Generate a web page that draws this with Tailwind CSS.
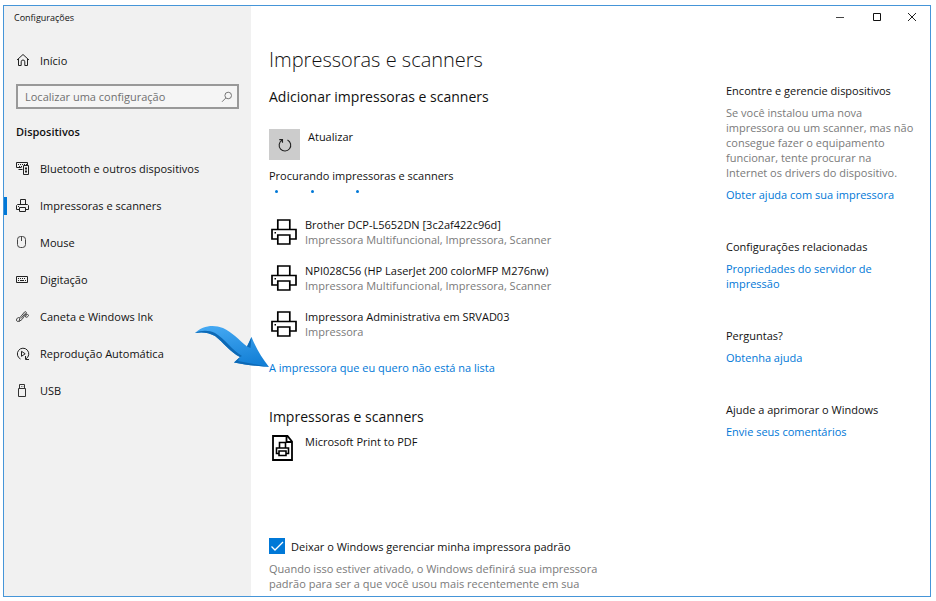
<!DOCTYPE html>
<html lang="pt-BR">
<head>
  <meta charset="UTF-8">
  <meta name="viewport" content="width=device-width, initial-scale=1.0">
  <title>Configurações</title>
  <script src="https://cdn.jsdelivr.net/npm/@tailwindcss/browser@4"></script>
</head>
<body class="bg-white font-['Open_Sans',sans-serif] text-[11px] leading-[15px] text-[#111]">

  <!-- Shared printer icon -->
  <svg class="hidden">
    <symbol id="printer" viewBox="0 0 26 26">
      <path d="M6.8 10V1h12v9M6.8 20H1V10.500h24V20h-6.2M6.8 16h12v9h-12z" fill="none" stroke="#000" stroke-width="1.7"/>
      <path d="M3.5 13h1.500v1.500H3.500z" fill="#000"/>
    </symbol>
  </svg>

  <div class="h-screen pt-[5px] pr-[5px] pb-1 pl-[3px]">
    <div class="relative flex h-full overflow-hidden border border-[#4595d8]">

      <!-- Sidebar -->
      <aside class="w-[247px] shrink-0 bg-[#f1f1f1]">
        <div class="flex h-[22px] items-center pl-[10px] text-[9px]">Configurações</div>

        <a href="#" class="mt-[14px] flex h-9 items-center gap-[10px] pl-3">
          <svg class="size-[14px]" viewBox="0 0 14 14" fill="none" stroke="#222"><path d="M1 7 7 1.500 13 7M2.500 6v6.500h2.700V8.800a1.800 1.800 0 0 1 3.600 0v3.700h2.700V6"/></svg>
          Início
        </a>

        <div class="mx-3 mt-[6px] flex h-[25px] items-center border-2 border-[#999] bg-[#f5f5f5] pr-1">
          <input type="text" aria-label="Localizar uma configuração" placeholder="Localizar uma configuração" class="w-full min-w-0 bg-transparent pl-[7px] outline-none placeholder:text-[#707070]">
          <svg class="size-3 shrink-0" viewBox="0 0 12 12" fill="none" stroke="#777"><circle cx="7.200" cy="4.500" r="3.300"/><path d="M4.800 7 1 10.800"/></svg>
        </div>

        <h2 class="mt-[13px] h-5 pl-3 leading-5 font-semibold">Dispositivos</h2>

        <nav class="mt-2">
          <a href="#" class="flex h-[37px] items-center gap-[10px] pl-3">
            <svg class="size-[14px]" viewBox="0 0 14 14" fill="none" stroke="#222"><path d="M6.500 7.500h-4M.5 5.500v-5h11v3M.5 5.500h5"/><path d="M2 2.500h9M3 4.500h4" stroke-dasharray="1 1"/><path d="M7.500 3.500h5v9h-5zM10 5v6M9 6.500h2M9 9.500h2"/></svg>
            Bluetooth e outros dispositivos
          </a>
          <a href="#" class="flex h-[37px] items-center" aria-current="page">
            <span class="mr-[9px] h-[18px] w-[3px] bg-[#0078d7]"></span>
            <svg class="mr-[10px] size-[14px]" viewBox="0 0 14 14" fill="none" stroke="#222"><path d="M4.500 5.500v-5h5v5M3.500 10.500H.5v-4l1-1h10l1 1v4h-3M3.500 8.500h6v4h-6zM2 7.500h1"/></svg>
            Impressoras e scanners
          </a>
          <a href="#" class="flex h-[37px] items-center gap-[10px] pl-3">
            <svg class="size-[14px]" viewBox="0 0 14 14" fill="none" stroke="#444"><rect x="1.500" y=".5" width="8" height="11" rx="3"/><path d="M5.500 1v4"/></svg>
            Mouse
          </a>
          <a href="#" class="flex h-[37px] items-center gap-[10px] pl-3">
            <svg class="size-[14px]" viewBox="0 0 14 14" fill="none" stroke="#222"><path d="M.5 3.500h11v6H.5z"/><path d="M2 5.500h8" stroke-dasharray="1 1"/><path d="M2 7.500h1M4 7.500h4M9 7.500h1"/></svg>
            Digitação
          </a>
          <a href="#" class="flex h-[37px] items-center gap-[10px] pl-3">
            <svg class="size-[14px]" viewBox="0 0 14 14" fill="none" stroke="#333" stroke-width=".9"><path d="M3.500 7.500C1.500 7.500.5 8.500.5 10s1.500 2 2.500 1"/><path d="M3 11.500l1-4L8.500 2c.8-1 2.500.2 1.700 1.300L6 9.500l-3 2zM9 3.500 5 8.500"/><path d="M10 3.500c1.500.5-1 2.500-.5 3.500s3-.5 3-1.500-1-1.500-2-.5"/></svg>
            Caneta e Windows Ink
          </a>
          <a href="#" class="flex h-[37px] items-center gap-[10px] pl-3">
            <svg class="size-[14px]" viewBox="0 0 14 14" fill="none" stroke="#222"><path d="M4.500 12A5.700 5.700 0 1 1 10 11.800M9.500 9v3.500H13M5.500 4.300v5l3.700-2.500z"/></svg>
            Reprodução Automática
          </a>
          <a href="#" class="flex h-[37px] items-center gap-[10px] pl-3">
            <svg class="size-[14px]" viewBox="0 0 14 14" fill="none" stroke="#333"><path d="M2.500 4.500h7v8h-7zM3.500 4.500v-4h5v4M5 2.500h.6M6.700 2.500h.6"/></svg>
            USB
          </a>
        </nav>
      </aside>

      <div class="flex min-w-0 flex-1 flex-col">
        <!-- Window buttons -->
        <div class="flex h-[22px] shrink-0 items-center justify-end gap-6 pr-3">
          <button type="button" aria-label="Minimizar"><svg class="size-3" viewBox="0 0 12 12" stroke="#444"><path d="M2 6.500h8"/></svg></button>
          <button type="button" aria-label="Maximizar"><svg class="size-3" viewBox="0 0 12 12" fill="none" stroke="#111"><path d="M3.500 2.500h7v7h-7z"/></svg></button>
          <button type="button" aria-label="Fechar"><svg class="size-3" viewBox="0 0 12 12" stroke="#222"><path d="m2 2 8 8M10 2l-8 8"/></svg></button>
        </div>

        <div class="flex min-h-0 flex-1">
          <!-- Main column -->
          <main class="min-w-0 flex-1 pl-[18px]">
            <h1 class="mt-[18px] text-[20px] leading-7 font-light">Impressoras e scanners</h1>
            <h2 class="mt-[13px] text-[14px] leading-5">Adicionar impressoras e scanners</h2>

            <div class="mt-[22px] flex gap-2">
              <button type="button" id="refresh" class="flex size-[31px] items-center justify-center bg-[#ccc]">
                <svg class="size-[14px]" viewBox="0 0 14 14" fill="none" stroke="#222" stroke-width="1.100"><path d="M9.500 2A5.800 5.800 0 1 1 4 2.200M1.300 1.600H4.500v3.200"/></svg>
              </button>
              <label for="refresh">Atualizar</label>
            </div>

            <p class="mt-2">Procurando impressoras e scanners</p>
            <div class="mt-[7px] flex h-[3px] pl-[6px]">
              <span class="mr-[33px] size-[3px] rounded-full bg-[#0078d7]"></span>
              <span class="mr-[42px] size-[3px] rounded-full bg-[#0078d7]"></span>
              <span class="size-[3px] rounded-full bg-[#0078d7]"></span>
            </div>

            <ul class="mt-6 flex flex-col gap-4">
              <li class="flex h-[30px] gap-2 pl-[2px]">
                <svg class="mt-[2px] size-[26px]"><use href="#printer"/></svg>
                <div>
                  <p>Brother DCP-L5652DN [3c2af422c96d]</p>
                  <p class="text-[#7a7a7a]">Impressora Multifuncional, Impressora, Scanner</p>
                </div>
              </li>
              <li class="flex h-[30px] gap-2 pl-[2px]">
                <svg class="mt-[2px] size-[26px]"><use href="#printer"/></svg>
                <div>
                  <p>NPI028C56 (HP LaserJet 200 colorMFP M276nw)</p>
                  <p class="text-[#7a7a7a]">Impressora Multifuncional, Impressora, Scanner</p>
                </div>
              </li>
              <li class="flex h-[30px] gap-2 pl-[2px]">
                <svg class="mt-[2px] size-[26px]"><use href="#printer"/></svg>
                <div>
                  <p>Impressora Administrativa em SRVAD03</p>
                  <p class="text-[#7a7a7a]">Impressora</p>
                </div>
              </li>
            </ul>

            <a href="#" class="mt-[21px] block text-[#0078d7]">A impressora que eu quero não está na lista</a>

            <h2 class="mt-8 text-[14px] leading-5">Impressoras e scanners</h2>
            <div class="mt-[7px] flex gap-2 pl-[2px]">
              <svg class="mt-px size-[26px]" viewBox="0 0 26 26" fill="none" stroke="#000" stroke-width="1.800"><path d="M2 1h14.500L21 6.500V25H2zM15.500 1v6H21"/><path d="M8.500 13V7.500h6V13M8 18.500H5.500V13h12v5.500H15M8 16h7v4.500H8z" stroke-width="1.600"/></svg>
              <p>Microsoft Print to PDF</p>
            </div>

            <div class="relative mt-[77px] flex h-4 items-center gap-[6px]">
              <input type="checkbox" id="manage-default" checked class="peer size-4 appearance-none border border-[#0078d7] checked:bg-[#0078d7]">
              <svg class="pointer-events-none absolute top-0 left-0 hidden size-4 peer-checked:block" viewBox="0 0 16 16" fill="none" stroke="#fff" stroke-width="1.300"><path d="m2.500 8.500 3.500 3.500 8-8"/></svg>
              <label for="manage-default">Deixar o Windows gerenciar minha impressora padrão</label>
            </div>
            <p class="mt-[7px] w-[340px] text-[#7a7a7a]">Quando isso estiver ativado, o Windows definirá sua impressora padrão para ser a que você usou mais recentemente em sua</p>
          </main>

          <!-- Help column -->
          <aside class="w-[204px] shrink-0 pt-[55px] pr-4">
            <h3>Encontre e gerencie dispositivos</h3>
            <p class="mt-[7px] text-[#7a7a7a]">Se você instalou uma nova impressora ou um scanner, mas não consegue fazer o equipamento funcionar, tente procurar na Internet os drivers do dispositivo.</p>
            <a href="#" class="mt-[7px] block text-[#0078d7]">Obter ajuda com sua impressora</a>

            <h3 class="mt-[37px]">Configurações relacionadas</h3>
            <a href="#" class="mt-[7px] block w-[160px] text-[#0078d7]">Propriedades do servidor de impressão</a>

            <h3 class="mt-[37px]">Perguntas?</h3>
            <a href="#" class="mt-[7px] block text-[#0078d7]">Obtenha ajuda</a>

            <h3 class="mt-[37px]">Ajude a aprimorar o Windows</h3>
            <a href="#" class="mt-[7px] block text-[#0078d7]">Envie seus comentários</a>
          </aside>
        </div>
      </div>

      <!-- Arrow pointing at the link -->
      <svg class="pointer-events-none absolute top-[318px] left-[190px] h-[46px] w-[76px]" viewBox="0 0 76 46">
        <defs>
          <linearGradient id="arrow" x1="0.2" y1="0" x2="0.5" y2="1">
            <stop offset="0" stop-color="#45a9f3"/>
            <stop offset="1" stop-color="#1480d6"/>
          </linearGradient>
        </defs>
        <path d="M1 9C8 2 19 0 29 4c9 4 16 12 24 18.500L57.500 13C62 24 68 34 75 43c-12-1-23-2-35-4.500L46 33C36 28 30 19 21 12 14 8 7 8 1 9z" fill="url(#arrow)"/>
        <path d="M1 9c6-3 14-3 20 0 10 6 17 17 27 23l-2 1C36 28 30 19 21 12 14 8 7 8 1 9zM40 38.500l6-5.500-2 4 31 6c-12-1-23-2-35-4.500z" fill="#0d69b5"/>
        <path d="m53 22.500 4.500-9.500-1 11z" fill="#0d69b5"/>
      </svg>
    </div>
  </div>

</body>
</html>
